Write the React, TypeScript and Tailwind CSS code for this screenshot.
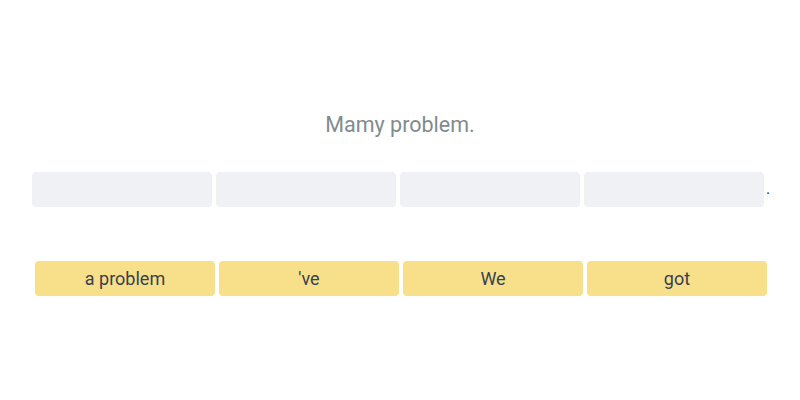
import React from 'react';

const slots = [0, 1, 2, 3];
const words = ['a problem', "'ve", 'We', 'got'];

export default function App() {
  return (
    <div className="w-[800px] h-[400px] bg-white flex flex-col items-center pt-[111px] font-['Roboto',sans-serif]">
      {/* Prompt */}
      <p className="text-[21.5px] leading-[28px] text-[#7f8c8d]">Mamy problem.</p>

      {/* Answer slots */}
      <div className="mt-[33px] ml-[2px] flex items-center">
        <div className="flex gap-1">
          {slots.map((i) => (
            <div key={i} className="w-[180px] h-[35px] rounded bg-[#eff1f5]" />
          ))}
        </div>
        <span className="ml-[2px] text-[16px] leading-[24px] text-[#2c3e50] -mt-[2px]">.</span>
      </div>

      {/* Word bank */}
      <div className="mt-[54px] ml-[2px] flex gap-1">
        {words.map((w, i) => (
          <button
            key={i}
            className="w-[180px] h-[35px] rounded bg-[#f8e08a] text-[18px] text-[#374151] flex items-center justify-center"
          >
            {w}
          </button>
        ))}
      </div>
    </div>
  );
}
